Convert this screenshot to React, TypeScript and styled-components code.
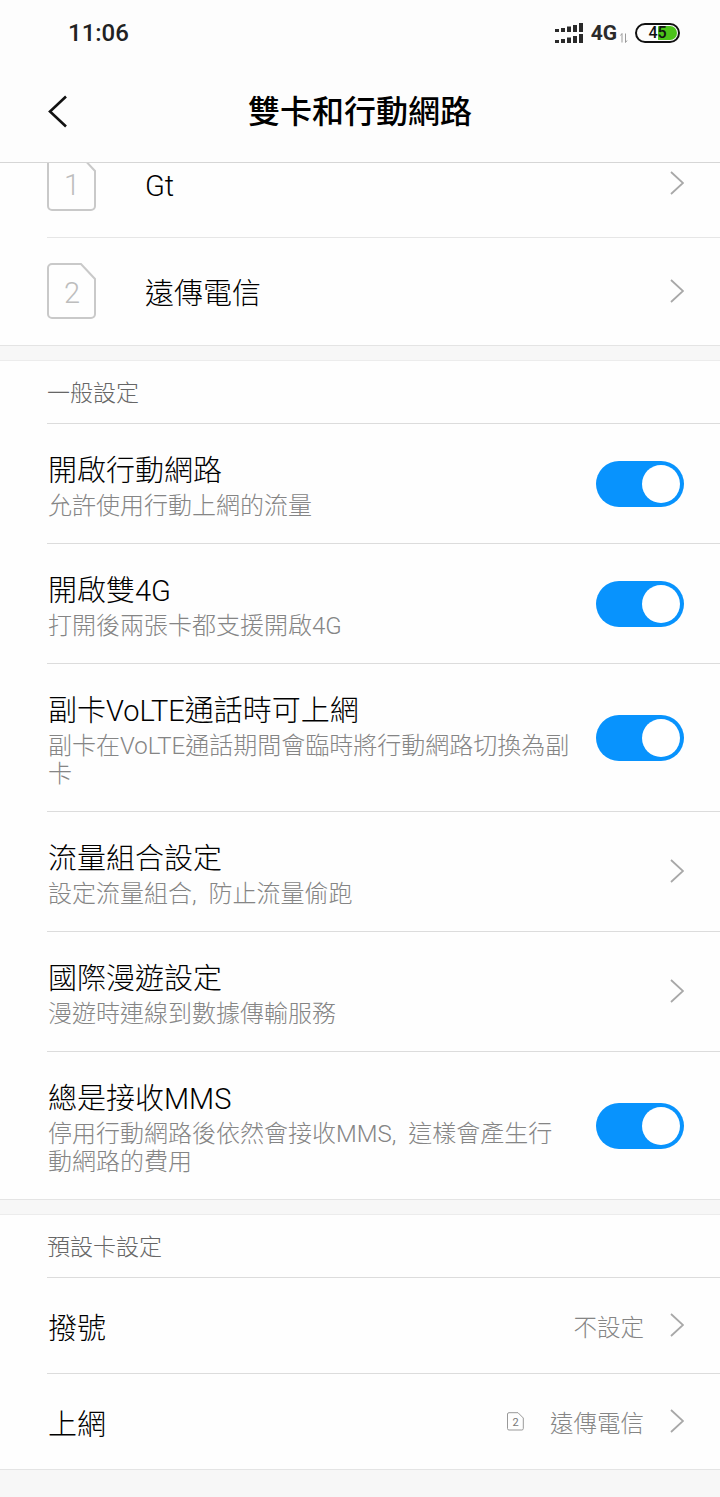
import React from 'react'
import styled, { createGlobalStyle } from 'styled-components'

const GlobalStyle = createGlobalStyle`
  html, body {
    margin: 0;
    padding: 0;
    background: #f7f7f7;
  }
  * {
    box-sizing: border-box;
  }
`

const Page = styled.div`
  width: 720px;
  height: 1497px;
  display: flex;
  flex-direction: column;
  overflow: hidden;
  background: #f7f7f7;
  font-family: "Roboto", "Noto Sans CJK TC", sans-serif;
`

const StatusBar = styled.div`
  height: 64px;
  flex-shrink: 0;
  display: flex;
  align-items: center;
  justify-content: space-between;
  padding: 2px 40px 0 68px;
  background: #fdfdfd;
`

const Clock = styled.div`
  font-family: "Roboto", sans-serif;
  font-size: 24px;
  font-weight: 500;
  color: #222;
`

const StatusIcons = styled.div`
  display: flex;
  align-items: center;
`

const NetworkLabel = styled.div`
  font-family: "Roboto", sans-serif;
  font-size: 21px;
  font-weight: 700;
  color: #2b2b2b;
  margin-left: 8px;
`

const Battery = styled.div`
  position: relative;
  width: 45px;
  height: 20px;
  margin-left: 7px;
  border: 2px solid #111;
  border-radius: 10px;
  overflow: hidden;
  display: flex;
  align-items: center;
  justify-content: center;
  font-family: "Roboto", sans-serif;
  font-size: 16px;
  font-weight: 500;
  color: #111;
`

const BatteryFill = styled.div`
  position: absolute;
  top: 1px;
  bottom: 1px;
  right: 1px;
  width: 19px;
  background: #4cc31a;
  border-radius: 1px 8px 8px 1px;
`

const BatteryText = styled.span`
  position: relative;
  line-height: 16px;
`

const Header = styled.div`
  height: 99px;
  flex-shrink: 0;
  display: flex;
  align-items: center;
  justify-content: center;
  position: relative;
  background: #fdfdfd;
  border-bottom: 1px solid #d6d6d6;
  padding-bottom: 3px;
`

const BackIcon = styled.svg`
  position: absolute;
  left: 48px;
  top: 31px;
`

const Title = styled.h1`
  margin: 0;
  font-size: 32px;
  font-weight: 500;
  color: #000;
  line-height: 44px;
`

const Scroller = styled.div`
  flex: 1;
  overflow: hidden;
`

const Content = styled.div`
  margin-top: -33px;
`

const Group = styled.div`
  background: #fefefe;
  border-bottom: 1px solid #e4e4e4;
`

const Spacer = styled.div`
  height: 15px;
  background: #f7f7f7;
  border-bottom: 1px solid #ececec;
`

const SectionLabel = styled.div`
  height: 63px;
  margin-left: 47px;
  padding-bottom: 2px;
  display: flex;
  align-items: center;
  font-size: 23px;
  font-weight: 300;
  color: #666;
  border-bottom: 1px solid #dcdcdc;
`

const Row = styled.div<{ $height: number; $last?: boolean }>`
  height: ${({ $height }) => $height}px;
  margin-left: 47px;
  padding-right: 36px;
  display: flex;
  align-items: center;
  border-bottom: ${({ $last }) => ($last ? 'none' : '1px solid #dcdcdc')};
`

const SimRow = styled(Row)`
  gap: 49px;
  border-bottom-color: #e6e6e6;
`

const SimName = styled.div`
  flex: 1;
  padding-top: 5px;
  font-size: 29px;
  font-weight: 300;
  color: #000;
  line-height: 40px;
`

const TextBlock = styled.div`
  flex: 1;
  min-width: 0;
  padding: 6px 0 0 1px;
`

const RowTitle = styled.div`
  font-size: 29px;
  font-weight: 300;
  color: #000;
  line-height: 36px;
`

const RowSubtitle = styled.div`
  width: 524px;
  margin-top: 3px;
  font-size: 24px;
  font-weight: 300;
  word-spacing: 6px;
  color: #858585;
  line-height: 28px;
`

const Value = styled.div`
  font-size: 23.5px;
  font-weight: 300;
  color: #858585;
  margin-right: 26px;
`

const SmallSim = styled.svg`
  margin-right: 26px;
`

const Toggle = styled.div`
  width: 88px;
  height: 46px;
  flex-shrink: 0;
  border-radius: 23px;
  background: #0893fd;
  display: flex;
  align-items: center;
  justify-content: flex-end;
  padding-right: 4px;
`

const ToggleKnob = styled.div`
  width: 38px;
  height: 38px;
  border-radius: 50%;
  background: #fff;
`

const Signal = () => (
  <svg width="28" height="21" viewBox="0 0 28 21">
    {[0, 11].map((y) =>
      [
        [0, 6, 3],
        [6, 5, 4],
        [12, 3.5, 5.5],
        [18, 2, 7],
        [24, 0, 9],
      ].map(([x, dy, h]) => (
        <rect key={`${y}-${x}`} x={x} y={y + dy} width="4" height={h} fill="#2a2a2a" />
      ))
    )}
  </svg>
)

const Arrows = () => (
  <svg width="8" height="10" viewBox="0 0 8 10" style={{ marginTop: 9, marginLeft: 3 }}>
    <path d="M2 9.5V.5M.5 2.5 2 .5M5.5.5v9M7 7.5 5.5 9.5" fill="none" stroke="#9a9a9a" strokeWidth="1" />
  </svg>
)

const Chevron = () => (
  <svg width="14" height="24" viewBox="0 0 14 24" style={{ marginTop: -1 }}>
    <path d="M1 1l12 11L1 23" fill="none" stroke="#a8a8a8" strokeWidth="1.8" />
  </svg>
)

const SimIcon = ({ n }: { n: string }) => (
  <svg width="49" height="56" viewBox="0 0 49 56" style={{ marginTop: -1 }}>
    <path
      d="M5 1h29l14 15v35a4 4 0 0 1-4 4H5a4 4 0 0 1-4-4V5a4 4 0 0 1 4-4z"
      fill="none"
      stroke="#c9c9c9"
      strokeWidth="2"
    />
    <text x="25" y="40" textAnchor="middle" fontFamily="Roboto, sans-serif" fontWeight="300" fontSize="29" fill="#bdbdbd">
      {n}
    </text>
  </svg>
)

type Setting = {
  title: string
  subtitle: string
  height: number
  control: 'toggle' | 'chevron'
}

const settings: Setting[] = [
  { title: '開啟行動網路', subtitle: '允許使用行動上網的流量', height: 120, control: 'toggle' },
  { title: '開啟雙4G', subtitle: '打開後兩張卡都支援開啟4G', height: 120, control: 'toggle' },
  { title: '副卡VoLTE通話時可上網', subtitle: '副卡在VoLTE通話期間會臨時將行動網路切換為副卡', height: 148, control: 'toggle' },
  { title: '流量組合設定', subtitle: '設定流量組合, 防止流量偷跑', height: 120, control: 'chevron' },
  { title: '國際漫遊設定', subtitle: '漫遊時連線到數據傳輸服務', height: 120, control: 'chevron' },
  { title: '總是接收MMS', subtitle: '停用行動網路後依然會接收MMS, 這樣會產生行動網路的費用', height: 147, control: 'toggle' },
]

export default function App() {
  return (
    <Page lang="zh-TW">
      <GlobalStyle />
      <StatusBar>
        <Clock>11:06</Clock>
        <StatusIcons>
          <Signal />
          <NetworkLabel>4G</NetworkLabel>
          <Arrows />
          <Battery>
            <BatteryFill />
            <BatteryText>45</BatteryText>
          </Battery>
        </StatusIcons>
      </StatusBar>
      <Header>
        <BackIcon width="20" height="33" viewBox="0 0 20 33">
          <path d="M18 1.5 2 16.5l16 15" fill="none" stroke="#111" strokeWidth="2.6" />
        </BackIcon>
        <Title>雙卡和行動網路</Title>
      </Header>
      <Scroller>
        <Content>
          <Group>
            <SimRow $height={108}>
              <SimIcon n="1" />
              <SimName>Gt</SimName>
              <Chevron />
            </SimRow>
            <SimRow $height={107} $last>
              <SimIcon n="2" />
              <SimName>遠傳電信</SimName>
              <Chevron />
            </SimRow>
          </Group>
          <Spacer />
          <Group>
            <SectionLabel>一般設定</SectionLabel>
            {settings.map((item, i) => (
              <Row key={item.title} $height={item.height} $last={i === settings.length - 1}>
                <TextBlock>
                  <RowTitle>{item.title}</RowTitle>
                  <RowSubtitle>{item.subtitle}</RowSubtitle>
                </TextBlock>
                {item.control === 'toggle' ? (
                  <Toggle>
                    <ToggleKnob />
                  </Toggle>
                ) : (
                  <Chevron />
                )}
              </Row>
            ))}
          </Group>
          <Spacer />
          <Group>
            <SectionLabel>預設卡設定</SectionLabel>
            <Row $height={96}>
              <TextBlock>
                <RowTitle>撥號</RowTitle>
              </TextBlock>
              <Value>不設定</Value>
              <Chevron />
            </Row>
            <Row $height={95} $last>
              <TextBlock>
                <RowTitle>上網</RowTitle>
              </TextBlock>
              <SmallSim width="17" height="19" viewBox="0 0 17 19">
                <path d="M2 .7h9l5.3 5.3v10.5a1.5 1.5 0 0 1-1.5 1.5H2a1.5 1.5 0 0 1-1.5-1.5V2A1.5 1.5 0 0 1 2 .7z" fill="none" stroke="#999" strokeWidth="1" />
                <text x="8.5" y="14" textAnchor="middle" fontFamily="Roboto, sans-serif" fontSize="11" fill="#777">
                  2
                </text>
              </SmallSim>
              <Value>遠傳電信</Value>
              <Chevron />
            </Row>
          </Group>
        </Content>
      </Scroller>
    </Page>
  )
}
